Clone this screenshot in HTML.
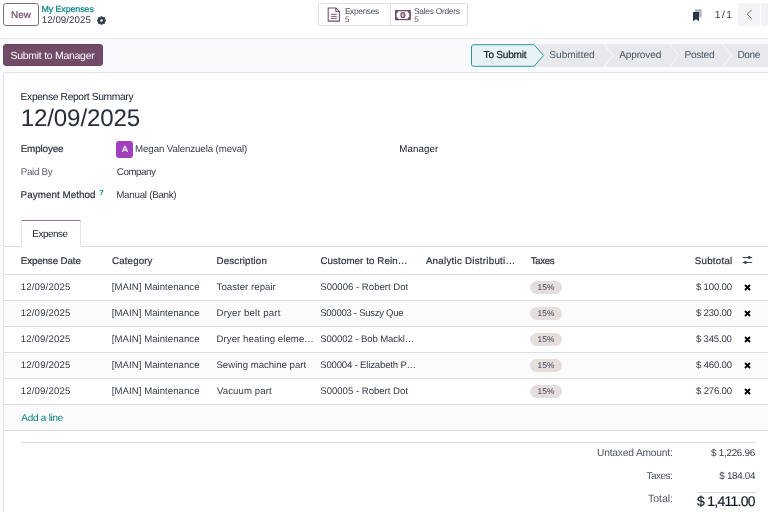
<!DOCTYPE html>
<html><head><meta charset="utf-8">
<style>
*{box-sizing:border-box;margin:0;padding:0}
html,body{width:768px;height:512px;overflow:hidden}
body{position:relative;background:#f9fafb;font-family:"Liberation Sans",sans-serif;color:#374151;text-rendering:geometricPrecision}
.a{position:absolute;white-space:nowrap;line-height:12px}
.cp{position:absolute;left:0;top:0;width:768px;height:39px;background:#fff;border-bottom:1px solid #e5e7eb}
.btn-new{position:absolute;left:3px;top:3px;width:36px;height:23px;border:1px solid #8a6a82;border-radius:3px;background:#fff}
.smart{position:absolute;left:318px;top:3px;width:150px;height:23px;border:1px solid #dee2e6;border-radius:2px;background:#fff}
.smart .div{position:absolute;left:71px;top:0;width:1px;height:21px;background:#dee2e6}
.pg{position:absolute;top:3px;height:23px;background:#f3f4f6;border-radius:3px 0 0 3px}
.submit{position:absolute;left:3px;top:44px;width:99.5px;height:22.4px;background:#714b67;border:1px solid #68425e;border-radius:3px}
.sheet{position:absolute;left:3px;top:72px;width:800px;height:500px;background:#fff;border:1px solid #dee2e6;border-radius:3px}
.hl{position:absolute;height:1px;background:#dcdee2}
.stripe{position:absolute;left:4px;width:764px;height:26px;background:#fbfbfb}
.badge{position:absolute;left:530px;width:32px;height:13px;border-radius:7px;background:#e6dddd}
.t9{font-size:9.5px}
.b{font-weight:bold}
.lbl{color:#2b3340}
.t{position:absolute;white-space:nowrap;line-height:0}
</style></head><body><div id="root" style="position:absolute;left:0;top:0;width:768px;height:512px;will-change:transform">
<!-- control panel -->
<div class="cp"></div>
<div class="btn-new"></div>
<svg class="a" style="left:97px;top:15.5px" width="9" height="9" viewBox="0 0 16 16"><path fill="#2d3646" fill-rule="evenodd" d="M6.43,0.26 L9.57,0.26 L10.01,2.67 L10.35,2.81 L12.36,1.42 L14.58,3.64 L13.19,5.65 L13.33,5.99 L15.74,6.43 L15.74,9.57 L13.33,10.01 L13.19,10.35 L14.58,12.36 L12.36,14.58 L10.35,13.19 L10.01,13.33 L9.57,15.74 L6.43,15.74 L5.99,13.33 L5.65,13.19 L3.64,14.58 L1.42,12.36 L2.81,10.35 L2.67,10.01 L0.26,9.57 L0.26,6.43 L2.67,5.99 L2.81,5.65 L1.42,3.64 L3.64,1.42 L5.65,2.81 L5.99,2.67z M10.4,8 A2.4,2.4 0 1 0 5.6,8 A2.4,2.4 0 1 0 10.4,8z"/></svg>

<div class="smart"><div class="div"></div></div>
<svg class="a" style="left:326px;top:6px" width="16" height="17" viewBox="0 0 16 17"><path d="M2.2 1.9H9.8L13.4 5.6V15.1H2.2Z" fill="none" stroke="#714b67" stroke-width="1.05"/><path d="M9.8 1.9V5.6H13.4" fill="none" stroke="#714b67" stroke-width="1"/><path d="M5 8.3h5.8M5 10.4h5.8M5 12.4h5.8" stroke="#714b67" stroke-width="0.9"/></svg>
<svg class="a" style="left:395px;top:9.5px" width="16" height="11" viewBox="0 0 16 11"><rect width="15.8" height="10.2" fill="#714b67"/><path d="M3.3 1.3H12.5A1.7 1.7 0 0 0 14.2 3V7.2A1.7 1.7 0 0 0 12.5 8.9H3.3A1.7 1.7 0 0 0 1.6 7.2V3A1.7 1.7 0 0 0 3.3 1.3Z" fill="#fff"/><ellipse cx="7.9" cy="5.1" rx="2.6" ry="3.1" fill="#714b67"/><ellipse cx="7.9" cy="5.1" rx="1.4" ry="2.0" fill="#fff"/><path d="M7.3 4L8.1 3.4V6.9" fill="none" stroke="#714b67" stroke-width="0.9"/></svg>

<svg class="a" style="left:692px;top:8px" width="10" height="14" viewBox="0 0 10 14"><path d="M3 1.2h6.7v8.6L8.2 8.7 7 9.6V4H3z" fill="#b4b9c1"/><path d="M1 4h6v9.2l-3-2-3 2z" fill="#2d3646"/></svg>
<div class="pg" style="left:738px;width:22px"></div>
<div class="pg" style="left:761px;width:10px;border-radius:0"></div>
<svg class="a" style="left:745px;top:9px" width="8" height="11" viewBox="0 0 8 11"><path d="M6.6 0.9L2.2 5.3 6.6 9.7" fill="none" stroke="#5b6270" stroke-width="0.9"/></svg>

<!-- action bar -->
<div class="submit"></div>

<!-- status bar -->
<svg class="a" style="left:470px;top:43px" width="298" height="25" viewBox="0 0 298 25">
<rect x="64" y="1.2" width="234" height="22.6" fill="#e7e9ed"/>
<path d="M1.5 3.7a2 2 0 0 1 2-2H64L73.6 12.5 64 23.3H3.5a2 2 0 0 1-2-2z" fill="#e6f2f3" stroke="#2f979c" stroke-width="1"/>
<path d="M134 1.2l9 11.3-9 11.3M199.5 1.2l9 11.3-9 11.3M252.5 1.2l9 11.3-9 11.3" fill="none" stroke="#fcfcfd" stroke-width="0.9"/>
</svg>

<!-- sheet -->
<div class="sheet"></div>

<div style="position:absolute;left:116px;top:141px;width:17px;height:17px;border-radius:3px;background:#a23fbe"></div>



<!-- tabs -->
<div class="hl" style="left:4px;top:246px;width:764px"></div>
<div style="position:absolute;left:20.5px;top:220px;width:60px;height:27px;background:#fff;border:1px solid #e6e7ea;border-top:1px solid #96758c;border-bottom:none"></div>

<!-- table header -->
<div class="hl" style="left:4px;top:274px;width:764px"></div>
<svg class="a" style="left:742px;top:256px" width="11" height="9" viewBox="0 0 11 9"><path d="M0.6 1.5h9.6M0.6 6.5h9.6" stroke="#374151" stroke-width="1"/><circle cx="7.2" cy="1.5" r="1.45" fill="#374151"/><circle cx="3.4" cy="6.5" r="1.45" fill="#374151"/></svg>

<!-- rows -->
<div class="stripe" style="top:301px"></div>
<div class="stripe" style="top:353px"></div>
<div class="stripe" style="top:405px"></div>
<div class="hl" style="left:4px;top:300px;width:764px"></div>
<div class="hl" style="left:4px;top:326px;width:764px"></div>
<div class="hl" style="left:4px;top:352px;width:764px"></div>
<div class="hl" style="left:4px;top:378px;width:764px"></div>
<div class="hl" style="left:4px;top:404px;width:764px"></div>
<div class="hl" style="left:4px;top:430px;width:764px"></div>

<div id="rows"></div>
<div class="badge" style="top:281px"></div>
<svg class="a" style="left:744px;top:284px" width="7" height="7" viewBox="0 0 7 7"><path d="M1 1L6 6M6 1L1 6" stroke="#000" stroke-width="1.9" stroke-linecap="butt"/></svg>

<div class="badge" style="top:307px"></div>
<svg class="a" style="left:744px;top:310px" width="7" height="7" viewBox="0 0 7 7"><path d="M1 1L6 6M6 1L1 6" stroke="#000" stroke-width="1.9" stroke-linecap="butt"/></svg>

<div class="badge" style="top:333px"></div>
<svg class="a" style="left:744px;top:336px" width="7" height="7" viewBox="0 0 7 7"><path d="M1 1L6 6M6 1L1 6" stroke="#000" stroke-width="1.9" stroke-linecap="butt"/></svg>

<div class="badge" style="top:359px"></div>
<svg class="a" style="left:744px;top:362px" width="7" height="7" viewBox="0 0 7 7"><path d="M1 1L6 6M6 1L1 6" stroke="#000" stroke-width="1.9" stroke-linecap="butt"/></svg>

<div class="badge" style="top:385px"></div>
<svg class="a" style="left:744px;top:388px" width="7" height="7" viewBox="0 0 7 7"><path d="M1 1L6 6M6 1L1 6" stroke="#000" stroke-width="1.9" stroke-linecap="butt"/></svg>


<!-- totals -->
<div class="hl" style="left:21px;top:442px;width:735px"></div>
<div class="hl" style="left:697px;top:492px;width:59px"></div>
<div class="t" style="left:11.12px;top:16px;font-size:9.86px;letter-spacing:0.002px;-webkit-text-stroke:0.2px #714b67;color:#714b67">New</div>
<div class="t" style="left:41.57px;top:9px;font-size:8.88px;letter-spacing:-0.102px;-webkit-text-stroke:0.2px #017e84;color:#017e84">My Expenses</div>
<div class="t" style="left:41.70px;top:21px;font-size:9.72px;letter-spacing:0.063px;color:#333a48">12/09/2025</div>
<div class="t" style="left:344.91px;top:11px;font-size:8.33px;letter-spacing:-0.339px;color:#4b5563">Expenses</div>
<div class="t" style="left:345.10px;top:20px;font-size:8.05px;letter-spacing:0.000px;color:#714b67">5</div>
<div class="t" style="left:413.91px;top:11px;font-size:8.33px;letter-spacing:-0.236px;color:#4b5563">Sales Orders</div>
<div class="t" style="left:414.29px;top:20px;font-size:8.05px;letter-spacing:0.000px;color:#714b67">5</div>
<div class="t" style="left:714.71px;top:16px;font-size:10.27px;letter-spacing:-0.672px;color:#333a48">1 / 1</div>
<div class="t" style="left:10.59px;top:57px;font-size:10.41px;letter-spacing:-0.241px;color:#ffffff">Submit to Manager</div>
<div class="t" style="left:483.59px;top:56px;font-size:10.13px;letter-spacing:-0.257px;-webkit-text-stroke:0.2px #151c29;color:#151c29">To Submit</div>
<div class="t" style="left:549.31px;top:56px;font-size:10.13px;letter-spacing:-0.028px;color:#4b5563">Submitted</div>
<div class="t" style="left:619.15px;top:56px;font-size:10.13px;letter-spacing:-0.168px;color:#4b5563">Approved</div>
<div class="t" style="left:684.41px;top:56px;font-size:10.13px;letter-spacing:-0.270px;color:#4b5563">Posted</div>
<div class="t" style="left:737.43px;top:56px;font-size:10.13px;letter-spacing:-0.441px;color:#4b5563">Done</div>
<div class="t" style="left:20.61px;top:98px;font-size:10.27px;letter-spacing:-0.355px;color:#151c29">Expense Report Summary</div>
<div class="t" style="left:20.72px;top:119px;font-size:24.13px;letter-spacing:-0.140px;color:#262d3b">12/09/2025</div>
<div class="t" style="left:20.64px;top:150px;font-size:9.86px;letter-spacing:-0.118px;-webkit-text-stroke:0.2px #2b3340;color:#2b3340">Employee</div>
<div class="t" style="left:121.91px;top:149px;font-size:8.88px;letter-spacing:0.000px;-webkit-text-stroke:0.2px #ffffff;color:#ffffff">A</div>
<div class="t" style="left:135.11px;top:150px;font-size:9.72px;letter-spacing:-0.120px;color:#333a48">Megan Valenzuela (meval)</div>
<div class="t" style="left:399.19px;top:150px;font-size:9.72px;letter-spacing:0.108px;color:#111827">Manager</div>
<div class="t" style="left:20.70px;top:173px;font-size:9.86px;letter-spacing:-0.344px;color:#5b626e">Paid By</div>
<div class="t" style="left:116.84px;top:173px;font-size:9.86px;letter-spacing:-0.514px;color:#333a48">Company</div>
<div class="t" style="left:20.58px;top:196px;font-size:9.86px;letter-spacing:0.038px;-webkit-text-stroke:0.2px #2b3340;color:#2b3340">Payment Method</div>
<div class="t" style="left:99.04px;top:193px;font-size:7.60px;letter-spacing:0.000px;font-weight:bold;color:#017e84">?</div>
<div class="t" style="left:116.23px;top:196px;font-size:9.86px;letter-spacing:-0.299px;color:#333a48">Manual (Bank)</div>
<div class="t" style="left:32.25px;top:235px;font-size:9.86px;letter-spacing:-0.425px;color:#151c29">Expense</div>
<div class="t" style="left:20.79px;top:262px;font-size:9.72px;letter-spacing:-0.094px;-webkit-text-stroke:0.2px #2b3340;color:#2b3340">Expense Date</div>
<div class="t" style="left:112.05px;top:262px;font-size:9.72px;letter-spacing:0.139px;-webkit-text-stroke:0.2px #2b3340;color:#2b3340">Category</div>
<div class="t" style="left:216.62px;top:262px;font-size:9.72px;letter-spacing:0.160px;-webkit-text-stroke:0.2px #2b3340;color:#2b3340">Description</div>
<div class="t" style="left:320.50px;top:262px;font-size:9.72px;letter-spacing:0.099px;-webkit-text-stroke:0.2px #2b3340;color:#2b3340">Customer to Rein…</div>
<div class="t" style="left:425.89px;top:262px;font-size:9.72px;letter-spacing:0.267px;-webkit-text-stroke:0.2px #2b3340;color:#2b3340">Analytic Distributi…</div>
<div class="t" style="left:530.76px;top:262px;font-size:9.72px;letter-spacing:-0.371px;-webkit-text-stroke:0.2px #2b3340;color:#2b3340">Taxes</div>
<div class="t" style="left:694.74px;top:262px;font-size:9.72px;letter-spacing:0.264px;-webkit-text-stroke:0.2px #2b3340;color:#2b3340">Subtotal</div>
<div class="t" style="left:20.72px;top:288px;font-size:9.58px;letter-spacing:0.185px;color:#333a48">12/09/2025</div>
<div class="t" style="left:111.82px;top:288px;font-size:9.58px;letter-spacing:0.055px;color:#333a48">[MAIN] Maintenance</div>
<div class="t" style="left:216.61px;top:288px;font-size:9.58px;letter-spacing:0.049px;color:#333a48">Toaster repair</div>
<div class="t" style="left:320.28px;top:288px;font-size:9.58px;letter-spacing:0.008px;color:#333a48">S00006 - Robert Dot</div>
<div class="t" style="left:537.62px;top:287px;font-size:8.33px;letter-spacing:0.065px;color:#3a4150">15%</div>
<div class="t" style="left:695.98px;top:288px;font-size:9.58px;letter-spacing:-0.183px;color:#333a48">$ 100.00</div>
<div class="t" style="left:20.75px;top:314px;font-size:9.58px;letter-spacing:0.185px;color:#333a48">12/09/2025</div>
<div class="t" style="left:111.83px;top:314px;font-size:9.58px;letter-spacing:0.055px;color:#333a48">[MAIN] Maintenance</div>
<div class="t" style="left:216.52px;top:314px;font-size:9.58px;letter-spacing:0.230px;color:#333a48">Dryer belt part</div>
<div class="t" style="left:320.24px;top:314px;font-size:9.58px;letter-spacing:-0.293px;color:#333a48">S00003 - Suszy Que</div>
<div class="t" style="left:537.62px;top:313px;font-size:8.33px;letter-spacing:0.065px;color:#3a4150">15%</div>
<div class="t" style="left:695.93px;top:314px;font-size:9.58px;letter-spacing:-0.183px;color:#333a48">$ 230.00</div>
<div class="t" style="left:20.72px;top:340px;font-size:9.58px;letter-spacing:0.185px;color:#333a48">12/09/2025</div>
<div class="t" style="left:111.82px;top:340px;font-size:9.58px;letter-spacing:0.055px;color:#333a48">[MAIN] Maintenance</div>
<div class="t" style="left:216.49px;top:340px;font-size:9.58px;letter-spacing:0.083px;color:#333a48">Dryer heating eleme…</div>
<div class="t" style="left:320.26px;top:340px;font-size:9.58px;letter-spacing:-0.101px;color:#333a48">S00002 - Bob Mackl…</div>
<div class="t" style="left:537.62px;top:339px;font-size:8.33px;letter-spacing:0.065px;color:#3a4150">15%</div>
<div class="t" style="left:695.94px;top:340px;font-size:9.58px;letter-spacing:-0.183px;color:#333a48">$ 345.00</div>
<div class="t" style="left:20.75px;top:366px;font-size:9.58px;letter-spacing:0.185px;color:#333a48">12/09/2025</div>
<div class="t" style="left:111.83px;top:366px;font-size:9.58px;letter-spacing:0.055px;color:#333a48">[MAIN] Maintenance</div>
<div class="t" style="left:216.47px;top:366px;font-size:9.58px;letter-spacing:0.014px;color:#333a48">Sewing machine part</div>
<div class="t" style="left:320.19px;top:366px;font-size:9.58px;letter-spacing:-0.178px;color:#333a48">S00004 - Elizabeth P…</div>
<div class="t" style="left:537.62px;top:365px;font-size:8.33px;letter-spacing:0.065px;color:#3a4150">15%</div>
<div class="t" style="left:696.08px;top:366px;font-size:9.58px;letter-spacing:-0.183px;color:#333a48">$ 460.00</div>
<div class="t" style="left:20.72px;top:392px;font-size:9.58px;letter-spacing:0.185px;color:#333a48">12/09/2025</div>
<div class="t" style="left:111.82px;top:392px;font-size:9.58px;letter-spacing:0.055px;color:#333a48">[MAIN] Maintenance</div>
<div class="t" style="left:216.99px;top:392px;font-size:9.58px;letter-spacing:0.111px;color:#333a48">Vacuum part</div>
<div class="t" style="left:320.28px;top:392px;font-size:9.58px;letter-spacing:-0.008px;color:#333a48">S00005 - Robert Dot</div>
<div class="t" style="left:537.62px;top:391px;font-size:8.33px;letter-spacing:0.065px;color:#3a4150">15%</div>
<div class="t" style="left:696.05px;top:392px;font-size:9.58px;letter-spacing:-0.183px;color:#333a48">$ 276.00</div>
<div class="t" style="left:21.28px;top:419px;font-size:9.99px;letter-spacing:-0.250px;color:#017e84">Add a line</div>
<div class="t" style="left:597.02px;top:454px;font-size:10.27px;letter-spacing:-0.207px;color:#4b5563">Untaxed Amount:</div>
<div class="t" style="left:711.00px;top:454px;font-size:9.86px;letter-spacing:-0.253px;color:#333a48">$ 1,226.96</div>
<div class="t" style="left:646.43px;top:477px;font-size:9.99px;letter-spacing:-0.477px;color:#4b5563">Taxes:</div>
<div class="t" style="left:719.34px;top:477px;font-size:9.86px;letter-spacing:-0.309px;color:#333a48">$ 184.04</div>
<div class="t" style="left:648.02px;top:499px;font-size:10.55px;letter-spacing:-0.043px;color:#4b5563">Total:</div>
<div class="t" style="left:697.02px;top:501px;font-size:13.95px;letter-spacing:-0.713px;-webkit-text-stroke:0.2px #151c29;color:#151c29">$ 1,411.00</div>
</div></body></html>
